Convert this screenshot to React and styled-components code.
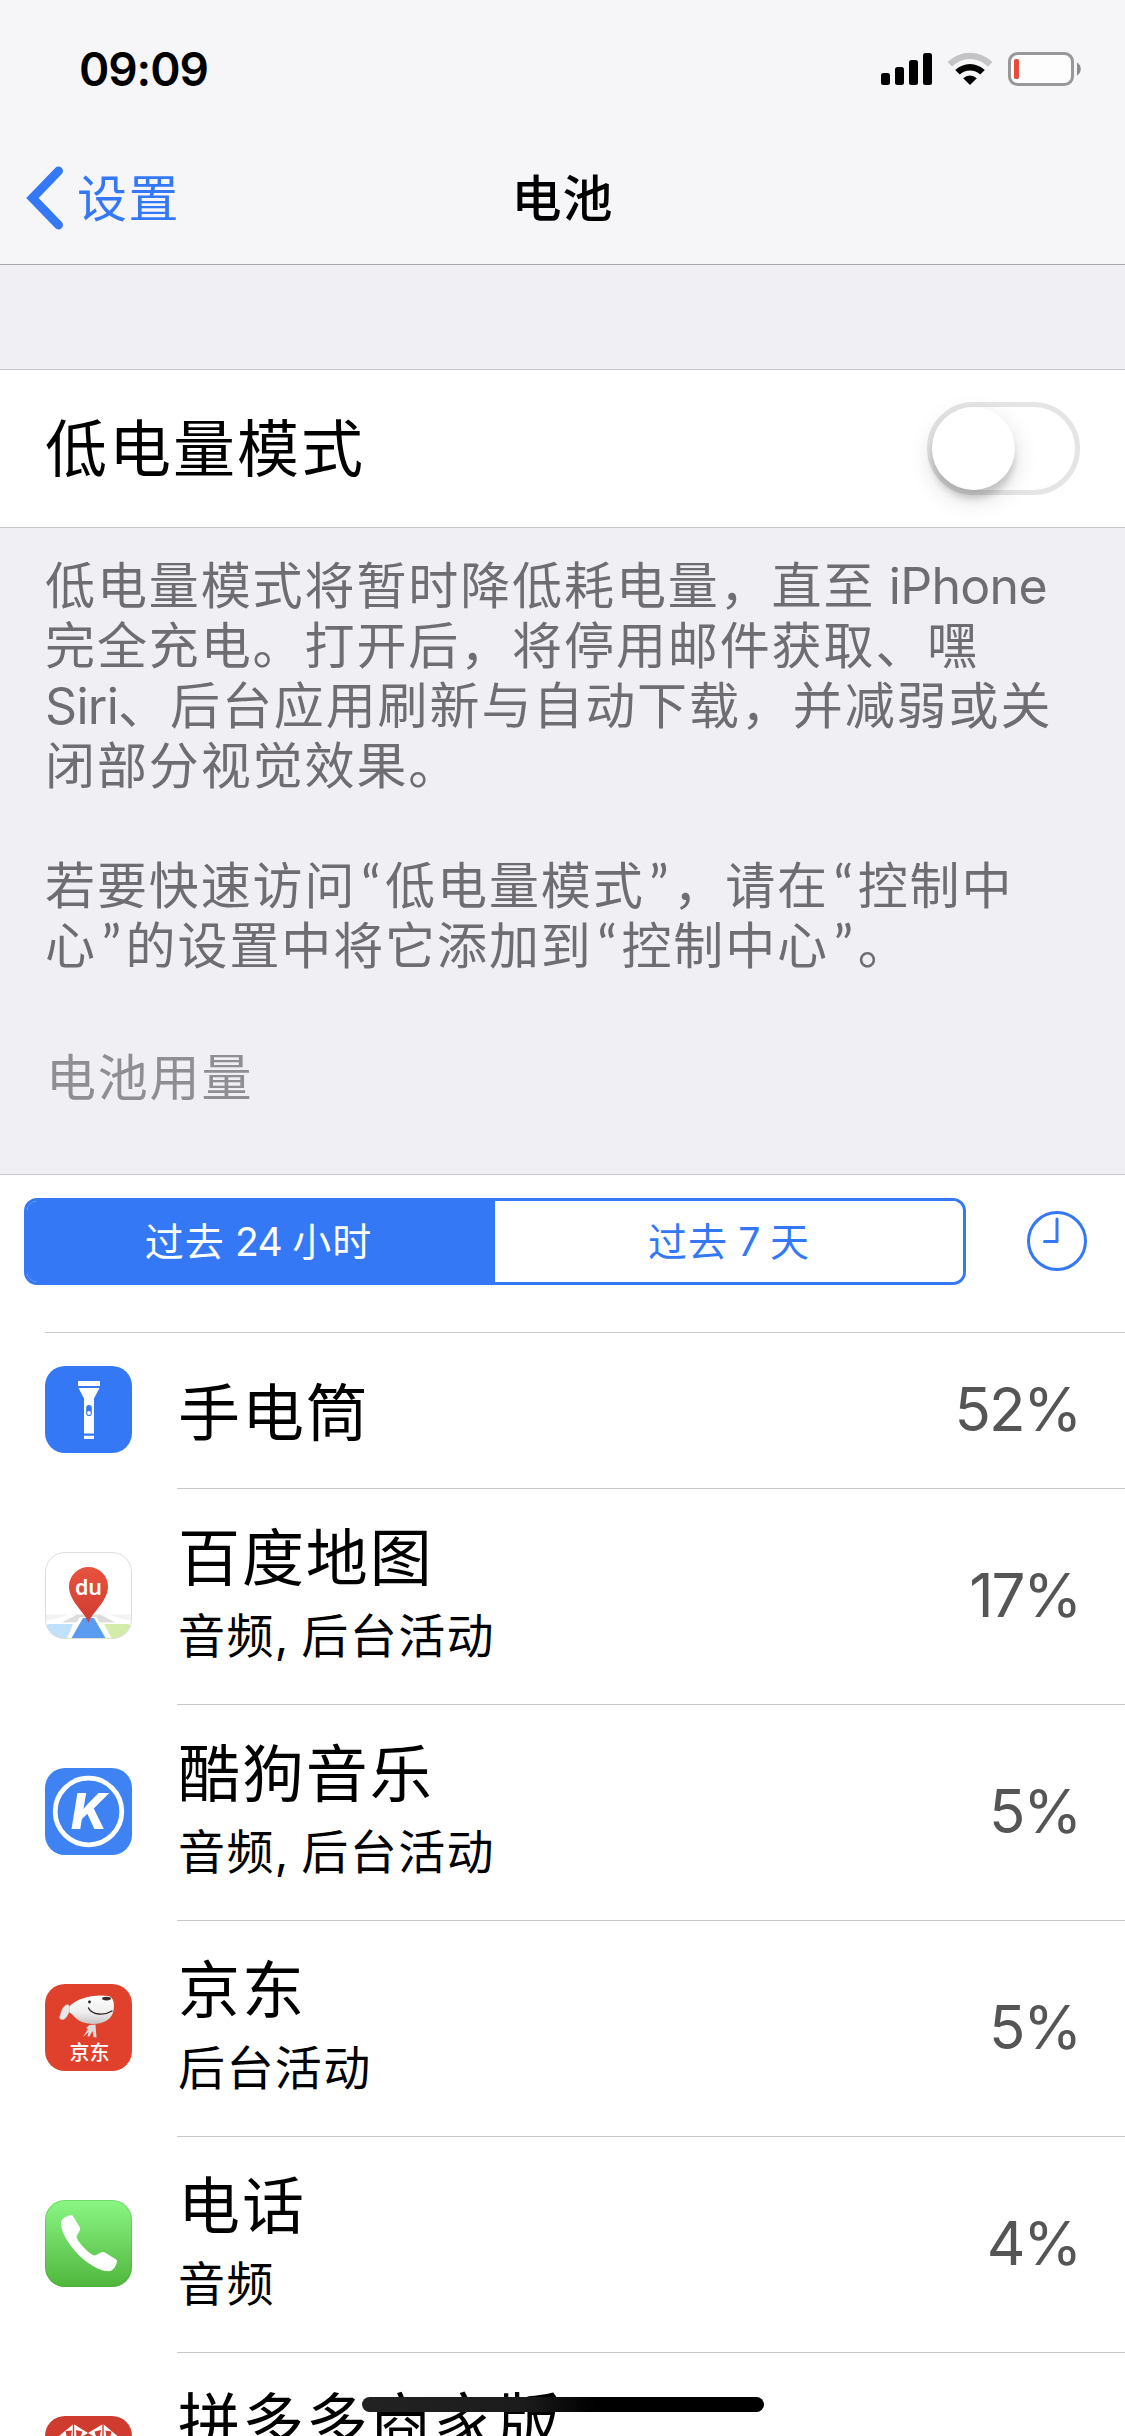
import React from 'react';
import styled, { createGlobalStyle } from 'styled-components';

const GlobalStyle = createGlobalStyle`
	* {
		box-sizing: border-box;
		margin: 0;
		padding: 0;
	}

	body {
		background: #efeff4;
		font-family: Inter, "Noto Sans CJK SC", sans-serif;
		color: #000;
		overflow: hidden;
	}

	svg {
		display: block;
	}
`

const Screen = styled.div`
	position: relative;
	width: 1125px;
	height: 2436px;
	overflow: hidden;
	background: #efeff4;
`

const Header = styled.header`
	height: 265px;
	background: #f6f6f9;
	border-bottom: 1px solid #a8a8ac;
`

const StatusBar = styled.div`
	height: 132px;
	padding: 39px 43px 0 79px;
	display: flex;
	justify-content: space-between;
`

const Time = styled.div`
	font-size: 46px;
	line-height: 60px;
	font-weight: 600;
	letter-spacing: -1.1px;
`

const StatusIcons = styled.div`
	display: flex;
	align-items: flex-start;
	padding-top: 13px;
`

const NavBar = styled.nav`
	height: 132px;
	display: grid;
	grid-template-columns: 1fr auto 1fr;
	align-items: center;
`

const Back = styled.a`
	display: flex;
	align-items: center;
	gap: 12px;
	padding-left: 25px;
	color: #3478f6;
	font-size: 50px;
	line-height: 66px;
	letter-spacing: 1.4px;
`

const BackLabel = styled.span`
	padding-top: 2px;
`

const NavTitle = styled.h1`
	padding-top: 2px;
	font-size: 50px;
	line-height: 66px;
	font-weight: 500;
	letter-spacing: 1px;
`

const ToggleCell = styled.div`
	margin-top: 104px;
	height: 159px;
	padding: 0 45px;
	display: flex;
	align-items: center;
	justify-content: space-between;
	background: #fff;
	border-top: 1px solid #c8c7cc;
	border-bottom: 1px solid #c8c7cc;
`

const CellLabel = styled.div`
	padding-top: 3px;
	font-size: 62px;
	line-height: 76px;
	letter-spacing: 2px;
`

const Switch = styled.div`
	width: 153px;
	height: 93px;
	border: 5px solid #e5e5e5;
	border-radius: 47px;
	background: #fff;
`

const Knob = styled.div`
	width: 83px;
	height: 83px;
	border-radius: 50%;
	background: #fff;
	box-shadow: 0 9px 24px rgba(0, 0, 0, 0.15), 0 9px 6px rgba(0, 0, 0, 0.14);
`

const Footnote = styled.p`
	height: 455px;
	padding: 28px 0 0 45px;
	font-size: 50px;
	line-height: 60px;
	letter-spacing: 1.9px;
	color: #6d6d72;
	white-space: pre;
`

const Latin = styled.span`
	letter-spacing: -0.7px;
`

const Quote = styled.span`
	display: inline-block;
	width: 28.7px;
	font-family: Lato, sans-serif;
	font-size: 54px;
	line-height: 40px;
	letter-spacing: 0;
	text-align: center;
`

const SectionTitle = styled.h2`
	height: 191px;
	padding: 65px 0 0 46px;
	font-size: 50px;
	line-height: 60px;
	font-weight: 400;
	letter-spacing: 1.8px;
	color: #8e8e93;
`

const Usage = styled.section`
	background: #fff;
	border-top: 1px solid #c8c7cc;
`

const Filter = styled.div`
	height: 157px;
	padding: 23px 38px 0 24px;
	display: flex;
	justify-content: space-between;
`

const Segments = styled.div`
	width: 942px;
	height: 87px;
	display: grid;
	grid-template-columns: 1fr 1fr;
	border: 3px solid #3478f6;
	border-radius: 13px;
	overflow: hidden;
`

const Segment = styled.button`
	border: 0;
	padding-right: ${({ $active }) => ($active ? 5 : 0)}px;
	background: ${({ $active }) => ($active ? '#3478f6' : '#fff')};
	color: ${({ $active }) => ($active ? '#fff' : '#3478f6')};
	font-family: inherit;
	font-size: 39px;
	line-height: 60px;
	letter-spacing: 1px;
	white-space: pre;
`

const List = styled.div`
	margin-left: 45px;
	border-top: 1px solid #c8c7cc;
`

const Row = styled.div`
	height: ${({ $tall }) => ($tall ? 216 : 156)}px;
	display: flex;
	gap: 45px;
	align-items: center;
`

const AppIcon = styled.div`
	width: 87px;
	height: 87px;
	margin-bottom: 3px;
`

const RowBody = styled.div`
	flex: 1;
	height: 100%;
	padding: 0 45px 0 1px;
	display: flex;
	align-items: center;
	justify-content: space-between;
	border-bottom: 1px solid #c8c7cc;
`

const Texts = styled.div`
	height: ${({ $tall }) => ($tall ? '151px' : 'auto')};
	padding-top: ${({ $tall }) => ($tall ? 0 : 7)}px;
`

const AppName = styled.div`
	font-size: 62px;
	line-height: 76px;
	letter-spacing: 1.9px;
	white-space: nowrap;
`

const AppNote = styled.div`
	margin-top: 9px;
	font-size: 47px;
	line-height: 60px;
	letter-spacing: 1.4px;
	word-spacing: -3px;
`

const Percent = styled.div`
	padding-bottom: 3px;
	font-size: 60px;
	line-height: 76px;
	letter-spacing: -2.2px;
	color: #555;
`

const HomeIndicator = styled.div`
	position: absolute;
	left: 362px;
	top: 2397px;
	width: 402px;
	height: 15px;
	border-radius: 8px;
	background: linear-gradient(90deg, #222 0%, #1c1c1c 40%, #000 58%);
`

const SignalIcon = () => (
	<svg width="52" height="34" viewBox="0 0 52 34">
		<rect x="0" y="21" width="9" height="12" rx="2.5" />
		<rect x="14" y="15" width="9" height="18" rx="2.5" />
		<rect x="28" y="8" width="9" height="25" rx="2.5" />
		<rect x="42" y="1" width="9" height="32" rx="2.5" />
	</svg>
)

const WifiIcon = () => (
	<svg width="46" height="34" viewBox="0 0 46 34">
		<path d="M0.5 10 A32 32 0 0 1 45.5 10 L41 14.4 A25.5 25.5 0 0 0 5 14.4 Z" fill="#c4c4c6" />
		<path d="M8.2 18 A21.5 21.5 0 0 1 37.8 18 L33.2 22.6 A14.8 14.8 0 0 0 12.8 22.6 Z" />
		<path d="M16.2 26.2 A10 10 0 0 1 29.8 26.2 L23 33 Z" />
	</svg>
)

const BatteryIcon = () => (
	<svg width="74" height="34" viewBox="0 0 74 34">
		<rect x="1.5" y="1.5" width="63" height="31" rx="8" fill="#fdfdfd" stroke="#98989b" strokeWidth="3" />
		<rect x="6" y="7" width="5" height="20" rx="1.8" fill="#e84a3c" />
		<path d="M69 10.5 C74 13 74 21 69 23.5 Z" fill="#8c8c8f" />
	</svg>
)

const ChevronIcon = () => (
	<svg width="40" height="66" viewBox="0 0 40 66">
		<path d="M33.5 6 L7.5 33 L33.5 60" fill="none" stroke="#3478f6" strokeWidth="9" strokeLinecap="round" strokeLinejoin="miter" />
	</svg>
)

const ClockIcon = () => (
	<svg width="60" height="60" viewBox="0 0 60 60">
		<circle cx="30" cy="30" r="28.5" fill="none" stroke="#3478f6" strokeWidth="3" />
		<path d="M30 8 V30.5 H17.5" fill="none" stroke="#3478f6" strokeWidth="3" strokeLinecap="round" strokeLinejoin="round" />
	</svg>
)

const TorchIcon = () => (
	<svg width="87" height="87" viewBox="0 0 87 87">
		<rect width="87" height="87" rx="20" fill="#3478f6" />
		<path d="M33 15 H55 V20 H33 Z M33.5 22 H54.5 L49 32.5 V67.5 H39 V32.5 Z M39 69.7 H49 V73 H39 Z" fill="#fff" />
		<rect x="41.2" y="39" width="5.6" height="11" rx="2.8" fill="#3478f6" />
		<circle cx="44" cy="47" r="1.9" fill="#fff" />
	</svg>
)

const BaiduMapIcon = () => (
	<svg width="87" height="87" viewBox="0 0 87 87">
		<defs>
			<clipPath id="mapClip">
				<rect width="87" height="87" rx="20" />
			</clipPath>
			<linearGradient id="pin" x1="0" y1="0" x2="0" y2="1">
				<stop offset="0" stopColor="#e8523f" />
				<stop offset="1" stopColor="#cf3c31" />
			</linearGradient>
		</defs>
		<g clipPath="url(#mapClip)">
			<rect width="87" height="87" fill="#fff" />
			<path d="M0 62.5 H87 V71 H0 Z" fill="#f3f3f3" />
			<path d="M27 62.5 H60 L74 70 H13 Z" fill="#dcdcdc" />
			<path d="M13 66 L24 62.5 H32 L14 72 H0 V69 Z M74 66 L63 62.5 H55 L73 72 H87 V69 Z" fill="#fff" />
			<path d="M0 74 L4 72 H28 L22 87 H0 Z" fill="#bfe1fa" />
			<path d="M87 74 L83 72 H59 L67 87 H87 Z" fill="#d3ecaa" />
			<path d="M35 65 H51 L66 87 H21 Z" fill="#fff" />
			<path d="M38 66 H49 L61 87 H26 Z" fill="#5c9cf0" />
		</g>
		<path d="M43.5 71 C41 61 24 50 24 34.5 A19.5 19.5 0 0 1 63 34.5 C63 50 46 61 43.5 71 Z" fill="url(#pin)" />
		<text x="43.5" y="42.5" textAnchor="middle" fontFamily="Noto Sans" fontSize="21.5" fontWeight="600" fill="#fff">du</text>
		<rect x="0.5" y="0.5" width="86" height="86" rx="19.5" fill="none" stroke="#dedede" />
	</svg>
)

const KugouIcon = () => (
	<svg width="87" height="87" viewBox="0 0 87 87">
		<rect width="87" height="87" rx="20" fill="#3f82f4" />
		<circle cx="43.5" cy="43.5" r="33.3" fill="none" stroke="#fff" strokeWidth="4.8" />
		<text x="26" y="61" fontFamily="Inter" fontSize="49" fontWeight="800" fontStyle="italic" fill="#fff">K</text>
	</svg>
)

const JdIcon = () => (
	<svg width="87" height="87" viewBox="0 0 87 87">
		<defs>
			<linearGradient id="dog" x1="0" y1="0" x2="0" y2="1">
				<stop offset="0" stopColor="#fff" />
				<stop offset="0.6" stopColor="#eee" />
				<stop offset="1" stopColor="#c9c4c3" />
			</linearGradient>
		</defs>
		<rect width="87" height="87" rx="20" fill="#e0412c" />
		<path d="M24 23 C32 14 48 10 64 12 C70 14 70 25 67 31 C62 40 48 42 37 38 C30 35 28 30 24 28 Z" fill="url(#dog)" />
		<path d="M24 21 C19 19 16 27 14.5 34 C18 38 22 34 24.5 27 Z" fill="#e9e7e6" stroke="#c9c0bd" strokeWidth="0.6" />
		<ellipse cx="61.5" cy="14.6" rx="4.5" ry="1.8" fill="#3a2b28" />
		<circle cx="44.5" cy="18" r="1.4" fill="#2a1d1b" />
		<path d="M43.5 24 C47 31 59 32 67 27" fill="none" stroke="#2f2523" strokeWidth="1.4" strokeLinecap="round" />
		<path d="M44.5 41 L50.5 40.5 L51.5 53.5 L48.5 53 L47.5 47 L44.5 52.5 L42.5 52.5 L43.5 48 L38 53 L43 45 L41 44 Z" fill="#dcdcdc" />
		<text x="44.5" y="75.5" textAnchor="middle" fontFamily="Noto Sans CJK SC" fontSize="20" fontWeight="500" fill="#fff">京东</text>
	</svg>
)

const PhoneIcon = () => (
	<svg width="87" height="87" viewBox="0 0 87 87">
		<defs>
			<linearGradient id="green" x1="0" y1="0" x2="0" y2="1">
				<stop offset="0" stopColor="#8bf684" />
				<stop offset="1" stopColor="#50b63d" />
			</linearGradient>
		</defs>
		<rect width="87" height="87" rx="20" fill="url(#green)" />
		<rect x="0.5" y="0.5" width="86" height="86" rx="19.5" fill="none" stroke="#3c9a30" strokeOpacity="0.3" />
		<path d="M25 15.2 C26.5 14.7 27.5 15.3 28.2 16.5 L34.4 26.5 C35.3 28 35.2 29.8 34.4 31.2 C32 35.3 31 36 32.2 38.8 C35 44.5 41.5 51 47.5 54.7 C49.5 55.9 51 55.4 52.5 54.2 L56.5 52.3 C58 51.7 59.2 52 60.3 52.7 L70.8 59.2 C72 60 72.4 61.2 71.8 62.5 C70.5 67 68 71 63.5 71.2 C53 71.3 38 60.5 29.5 50.5 C22 41.5 16 31 16 23.5 C16 19 20 16.5 25 15.2 Z" fill="#fff" />
	</svg>
)

const PddIcon = () => (
	<svg width="87" height="87" viewBox="0 0 87 87">
		<rect width="87" height="87" rx="20" fill="#d03b2f" />
		<path d="M14 20 L28.5 8 L43 17 L58 8 L72.5 20 V46 L43 74 L14 46 Z" fill="#fff" />
		<path d="M28.5 8 V22 M58 8 V22" stroke="#d03b2f" strokeWidth="1.4" />
		<path d="M20.5 15 L27 14.5 L25.5 22 H22 Z M31 14 L37.5 15.5 L35 22 H31.5 Z M49.5 15.5 L56 14 L54.5 22 H51.5 Z M60.5 14.5 L66.5 15.5 L65 22 H61.5 Z" fill="#d03b2f" />
		<path d="M38 20 L43 17 L48 20 L43 26 Z" fill="#d03b2f" />
	</svg>
)

const apps = [
	{ name: '手电筒', percent: '52%', Icon: TorchIcon },
	{ name: '百度地图', note: '音频, 后台活动', percent: '17%', Icon: BaiduMapIcon, tall: true },
	{ name: '酷狗音乐', note: '音频, 后台活动', percent: '5%', Icon: KugouIcon, tall: true },
	{ name: '京东', note: '后台活动', percent: '5%', Icon: JdIcon, tall: true },
	{ name: '电话', note: '音频', percent: '4%', Icon: PhoneIcon, tall: true },
	{ name: '拼多多商家版', Icon: PddIcon, tall: true },
]

const AppRow = ({ name, note, percent, Icon, tall }) => (
	<Row $tall={tall}>
		<AppIcon><Icon /></AppIcon>
		<RowBody>
			<Texts $tall={tall}>
				<AppName>{name}</AppName>
				{note && <AppNote>{note}</AppNote>}
			</Texts>
			{percent && <Percent>{percent}</Percent>}
		</RowBody>
	</Row>
)

const SignalWrap = styled.div`
	margin-right: 14px;
`

const WifiWrap = styled.div`
	margin-right: 15px;
`

const ClockWrap = styled.div`
	padding-top: 13px;
`

const App = () => (
	<>
		<GlobalStyle />
		<Screen>
			<Header>
				<StatusBar>
					<Time>09:09</Time>
					<StatusIcons>
						<SignalWrap><SignalIcon /></SignalWrap>
						<WifiWrap><WifiIcon /></WifiWrap>
						<BatteryIcon />
					</StatusIcons>
				</StatusBar>
				<NavBar>
					<Back><ChevronIcon /><BackLabel>设置</BackLabel></Back>
					<NavTitle>电池</NavTitle>
				</NavBar>
			</Header>

			<ToggleCell>
				<CellLabel>低电量模式</CellLabel>
				<Switch><Knob /></Switch>
			</ToggleCell>

			<Footnote>
				低电量模式将暂时降低耗电量，直至<Latin> iPhone</Latin>{'\n'}
				完全充电。打开后，将停用邮件获取、嘿{'\n'}
				<Latin>Siri</Latin>、后台应用刷新与自动下载，并减弱或关{'\n'}
				闭部分视觉效果。{'\n\n'}
				若要快速访问<Quote>“</Quote>低电量模式<Quote>”</Quote>，请在<Quote>“</Quote>控制中{'\n'}
				心<Quote>”</Quote>的设置中将它添加到<Quote>“</Quote>控制中心<Quote>”</Quote>。
			</Footnote>
			<SectionTitle>电池用量</SectionTitle>

			<Usage>
				<Filter>
					<Segments>
						<Segment $active>过去<Latin> 24 </Latin>小时</Segment>
						<Segment>过去<Latin> 7 </Latin>天</Segment>
					</Segments>
					<ClockWrap><ClockIcon /></ClockWrap>
				</Filter>
				<List>
					{apps.map((app) => <AppRow key={app.name} {...app} />)}
				</List>
			</Usage>
			<HomeIndicator />
		</Screen>
	</>
)

export default App
